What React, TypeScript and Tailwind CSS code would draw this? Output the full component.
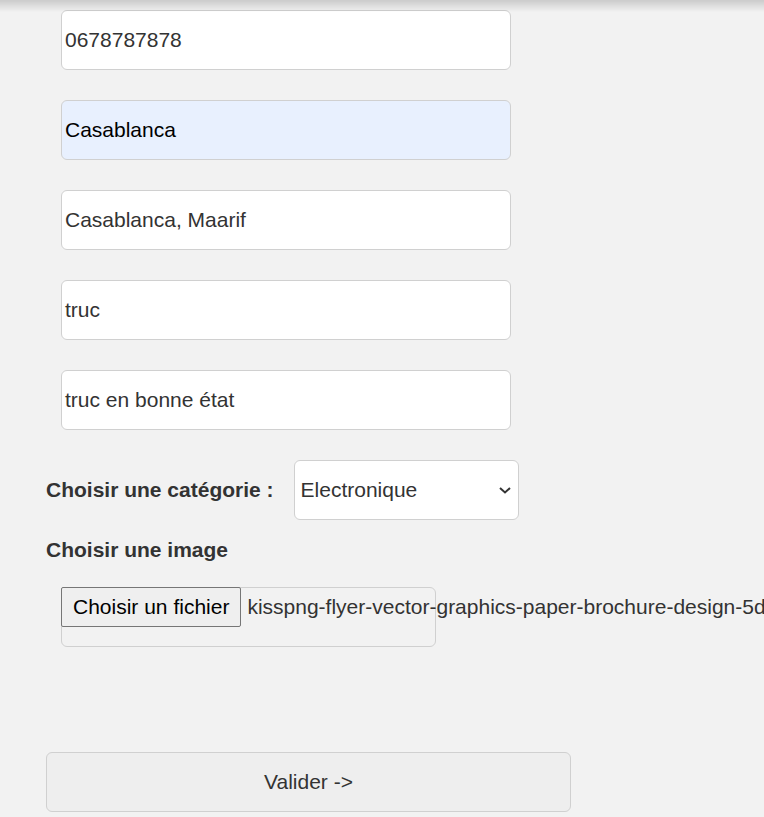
import React from 'react';

const fields = [
  { value: '0678787878', autofill: false },
  { value: 'Casablanca', autofill: true },
  { value: 'Casablanca, Maarif', autofill: false },
  { value: 'truc', autofill: false },
  { value: 'truc en bonne état', autofill: false },
];

const App: React.FC = () => {
  return (
    <div className="min-h-screen w-full overflow-hidden bg-[#f2f2f2] font-['Liberation_Sans',Arial,sans-serif] text-[#333]">
      {/* ombre du header fixe */}
      <div className="pointer-events-none fixed left-0 right-0 top-0 h-[12px] bg-gradient-to-b from-[rgba(0,0,0,0.16)] to-transparent" />

      <form className="flex flex-col pl-[46px] pt-[10px]">
        {fields.map((f) => (
          <div
            key={f.value}
            className={`ml-[15px] mb-[30px] flex h-[60px] w-[450px] items-center rounded-[6px] border border-[#d0d0d0] pl-[3px] text-[21px] ${
              f.autofill ? 'bg-[#e8f0fe] text-black' : 'bg-white'
            }`}
          >
            {f.value}
          </div>
        ))}

        <div className="flex items-center">
          <label className="mr-[20px] text-[21px] font-bold">Choisir une catégorie :</label>
          <div className="flex h-[60px] w-[225px] items-center justify-between rounded-[6px] border border-[#d0d0d0] bg-white pl-[6px] pr-[6px] text-[21px]">
            <span>Electronique</span>
            <svg width="14" height="10" viewBox="0 0 14 10" fill="none">
              <path d="M2 3l5 4.5L12 3" stroke="#333" strokeWidth="2" />
            </svg>
          </div>
        </div>

        <label className="mt-[18px] text-[21px] font-bold leading-[24px]">Choisir une image</label>

        <div className="ml-[15px] mt-[25px] flex h-[60px] w-[375px] items-start rounded-[6px] border border-[#d0d0d0]">
          <button
            type="button"
            className="-ml-px -mt-px h-[40px] shrink-0 rounded-[2px] border border-[#767676] bg-[#efefef] px-[11px] text-[21px] text-black"
          >
            Choisir un fichier
          </button>
          <span className="ml-[6px] mt-[7px] whitespace-nowrap text-[21px] leading-[24px]">
            kisspng-flyer-vector-graphics-paper-brochure-design-5d1a2c6e8b1f04.png
          </span>
        </div>

        <button
          type="button"
          className="mt-[105px] h-[60px] w-[525px] rounded-[6px] border border-[#d0d0d0] bg-[#eeeeee] text-[21px] text-[#333]"
        >
          Valider -&gt;
        </button>
      </form>
    </div>
  );
};

export default App;
